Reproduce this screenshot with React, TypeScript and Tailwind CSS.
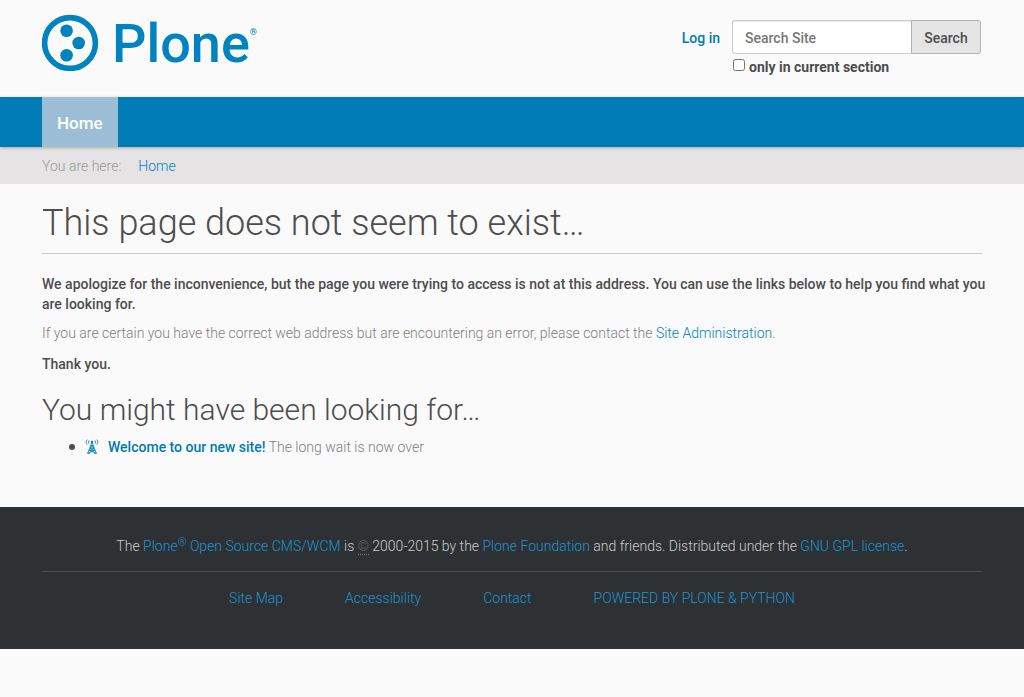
import React from "react";

const container = "mx-auto w-full max-w-[970px] px-[15px]";
const link = "text-[#007bb1] hover:underline";
const lightLink = "text-[#0083be] hover:underline";
const footerLink = "text-[#1a93d2] hover:underline";

function Logo() {
  return (
    <a href="#" aria-label="Plone" className="flex items-start gap-[13px] text-[#0083be]">
      <svg className="size-[57px]" viewBox="0 0 57 57" fill="currentColor" aria-hidden="true">
        <circle cx="28" cy="29" r="25.4" fill="none" stroke="currentColor" strokeWidth="5.6" />
        <circle cx="24.6" cy="16.800" r="6.300" />
        <circle cx="36.700" cy="29" r="6.300" />
        <circle cx="24.6" cy="41.200" r="6.300" />
      </svg>
      <span className="flex text-[54px] leading-[60px] font-medium">
        Plone
        <span className="mt-3 text-[9px] leading-3">®</span>
      </span>
    </a>
  );
}

function SearchForm() {
  return (
    <form className="w-[250px] pr-px" onSubmit={(e) => e.preventDefault()}>
      <div className="flex">
        <input
          type="search"
          aria-label="Search Site"
          placeholder="Search Site"
          className="h-[34px] min-w-0 flex-1 rounded-l-[3px] border border-r-0 border-[#ccc] bg-white px-3 pb-px pt-0.5 text-sm font-medium shadow-[inset_0_1px_1px_rgba(0,0,0,0.075)] placeholder:text-[#777]"
        />
        <button
          type="submit"
          className="h-[34px] w-[70px] rounded-r-[3px] border border-[#b3b3b3] bg-[#e5e5e5] pt-0.5 text-sm font-medium text-[#4d4d4d]"
        >
          Search
        </button>
      </div>
      <div className="flex items-start gap-1 pt-1">
        <input id="section-only" type="checkbox" className="mt-px ml-px size-[12px]" />
        <label htmlFor="section-only" className="text-sm leading-[18px] font-bold">
          only in current section
        </label>
      </div>
    </form>
  );
}

function AntennaIcon() {
  return (
    <svg
      className="mr-[9px] inline-block h-4 w-[14px] align-middle text-[#007bb1]"
      viewBox="0 0 14 16"
      fill="none"
      stroke="currentColor"
      aria-hidden="true"
    >
      <path d="M2.2 .6Q-.4 3 2.2 5.6M4 1.500Q2.8 3 4 4.700M11.8 .6Q14.4 3 11.8 5.6M10 1.500Q11.2 3 10 4.700" strokeWidth=".8" />
      <path d="M7 3 2.8 14M7 3l4.200 11M5.900 6.500h2.200M5 9h4M4 11.500h6M5.900 6.500 9 9l-5 2.500M8.100 6.500 5 9l5 2.500M4 11.500l7 2.500M10 11.500 3 14M2 14.300h3M9 14.300h3" strokeWidth=".8" />
      <circle cx="7" cy="3" r="1.200" fill="currentColor" stroke="none" />
    </svg>
  );
}

export default function App() {
  return (
    <div className="min-h-screen bg-[#fafafa] font-['Roboto',sans-serif] text-sm leading-5 font-light text-[#4d4d4d]">
      <header className="h-[97px]">
        <div className={`${container} flex items-start justify-between pt-[14px]`}>
          <Logo />
          <div className="flex items-start gap-3 pt-[6px]">
            <a href="#" className={`${link} py-2 font-medium`}>
              Log in
            </a>
            <SearchForm />
          </div>
        </div>
      </header>

      <nav aria-label="Main" className="relative bg-[#007bb5] shadow-[0_1px_3px_rgba(0,0,0,0.25)]">
        <div className={container}>
          <a
            href="#"
            className="inline-block bg-[#9bbdd6] px-[15px] pt-4 pb-[14px] align-top text-[17px] leading-5 font-medium text-white"
          >
            Home
          </a>
        </div>
      </nav>

      <nav aria-label="Breadcrumb" className="bg-[#e5e3e4]">
        <div className={`${container} flex gap-[17px] pt-[9px] pb-2 leading-5`}>
          <span className="text-[#999]">You are here:</span>
          <a href="#" className={lightLink}>
            Home
          </a>
        </div>
      </nav>

      <main className={`${container} pt-[19px] pb-[50px]`}>
        <h1 className="mb-5 border-b border-[#ccc] pb-[10px] text-[36px] leading-10 font-light">
          This page does not seem to exist…
        </h1>
        <p className="-mr-2 mb-[9px] font-medium">
          We apologize for the inconvenience, but the page you were trying to access is not at this
          address. You can use the links below to help you find what you are looking for.
        </p>
        <p className="mb-[11px] text-[#808080]">
          If you are certain you have the correct web address but are encountering an error, please
          contact the{" "}
          <a href="#" className={lightLink}>
            Site Administration
          </a>
          .
        </p>
        <p className="font-medium">Thank you.</p>
        <h2 className="mt-[18px] mb-[10px] text-[30px] leading-[35px] font-light">
          You might have been looking for…
        </h2>
        <ul>
          <li className="flex items-center pl-[27px]">
            <span className="mr-[10px] size-[6px] rounded-full bg-[#4d4d4d]" aria-hidden="true" />
            <AntennaIcon />
            <p>
              <a href="#" className={`${link} font-medium`}>
                Welcome to our new site!
              </a>{" "}
              <span className="text-[#808080]">The long wait is now over</span>
            </p>
          </li>
        </ul>
      </main>

      <footer className="bg-[#2e3133] text-[#ccc]">
        <div className={`${container} pt-[29px] pb-[41px] text-center`}>
          <p className="border-b border-[#4d4d4d] pb-[15px]">
            The{" "}
            <a href="#" className={footerLink}>
              Plone<sup className="text-[11px] leading-none">®</sup> Open Source CMS/WCM
            </a>{" "}
            is{" "}
            <abbr title="Copyright" className="border-b border-dotted border-[#808080] text-[#666] no-underline">
              ©
            </abbr>{" "}
            2000-2015 by the{" "}
            <a href="#" className={footerLink}>
              Plone Foundation
            </a>{" "}
            and friends. Distributed under the{" "}
            <a href="#" className={footerLink}>
              GNU GPL license
            </a>
            .
          </p>
          <ul className="flex flex-wrap justify-center gap-x-[62px] pt-4">
            <li><a href="#" className={footerLink}>Site Map</a></li>
            <li><a href="#" className={footerLink}>Accessibility</a></li>
            <li><a href="#" className={footerLink}>Contact</a></li>
            <li><a href="#" className={`${footerLink} uppercase`}>Powered by Plone &amp; Python</a></li>
          </ul>
        </div>
      </footer>
    </div>
  );
}
